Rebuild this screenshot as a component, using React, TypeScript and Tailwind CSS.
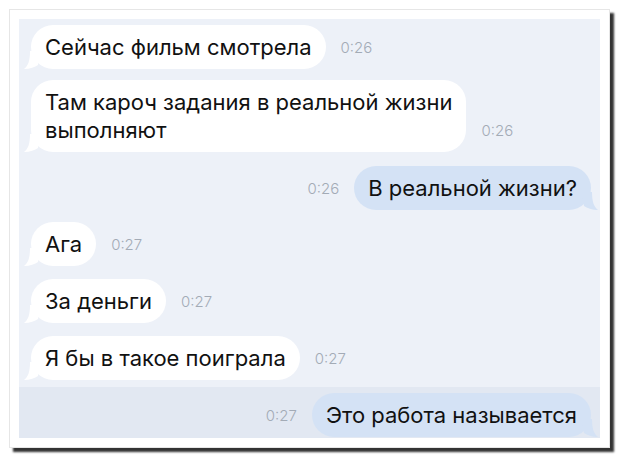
import React from 'react'

type Msg = {
  text: React.ReactNode
  time: string
  out?: boolean
  mt: string
}

function Tail({ out }: { out?: boolean }) {
  if (out) {
    return (
      <svg className="absolute -right-[7px] bottom-0" width="16" height="18" viewBox="0 0 16 18">
        <path d="M10 0 C10 10 12 15 16 18 C10 18 5 16 2 14 L0 0 Z" fill="#d4e2f5" />
      </svg>
    )
  }
  return (
    <svg className="absolute -left-[7px] bottom-0" width="16" height="18" viewBox="0 0 16 18">
      <path d="M6 0 C6 10 4 15 0 18 C6 18 11 16 14 14 L16 0 Z" fill="#ffffff" />
    </svg>
  )
}

function Bubble({ m }: { m: Msg }) {
  const time = (
    <span className="mb-[14px] text-[15px] leading-none text-[#a3abb6] font-light shrink-0">{m.time}</span>
  )
  return (
    <div className={`flex items-end gap-[15px] ${m.mt} ${m.out ? 'justify-end pr-[9px]' : 'pl-[12px]'}`}>
      {m.out && time}
      <div
        className={`relative rounded-[22px] px-[14px] py-[8px] text-[22px] leading-[28px] text-[#111] ${
          m.out ? 'bg-[#d4e2f5]' : 'bg-white'
        }`}
      >
        <Tail out={m.out} />
        <span className="relative">{m.text}</span>
      </div>
      {!m.out && time}
    </div>
  )
}

const messages: Msg[] = [
  { text: 'Сейчас фильм смотрела', time: '0:26', mt: 'mt-[6px]' },
  {
    text: (
      <>
        Там кароч задания в реальной жизни
        <br />
        выполняют
      </>
    ),
    time: '0:26',
    mt: 'mt-[11px]'
  },
  { text: 'В реальной жизни?', time: '0:26', out: true, mt: 'mt-[14px]' },
  { text: 'Ага', time: '0:27', mt: 'mt-[12px]' },
  { text: 'За деньги', time: '0:27', mt: 'mt-[13px]' },
  { text: 'Я бы в такое поиграла', time: '0:27', mt: 'mt-[13px]' }
]

export default function App() {
  return (
    <div
      className="w-[620px] h-[459px] bg-white pl-[9px] pt-[9px]"
      style={{ fontFamily: 'Inter, "Liberation Sans", sans-serif' }}
    >
      <div className="w-[601px] h-[439px] bg-white border border-[#e6e6e6] p-[9px] shadow-[4px_4px_2px_#333]">
        <div className="h-full bg-[#edf1f8] flex flex-col overflow-hidden">
          {messages.map((m, i) => (
            <Bubble key={i} m={m} />
          ))}
          <div className="mt-[7px] bg-[#e2e8f2] pt-[6px] flex-1">
            <Bubble m={{ text: 'Это работа называется', time: '0:27', out: true, mt: 'mt-0' }} />
          </div>
        </div>
      </div>
    </div>
  )
}
